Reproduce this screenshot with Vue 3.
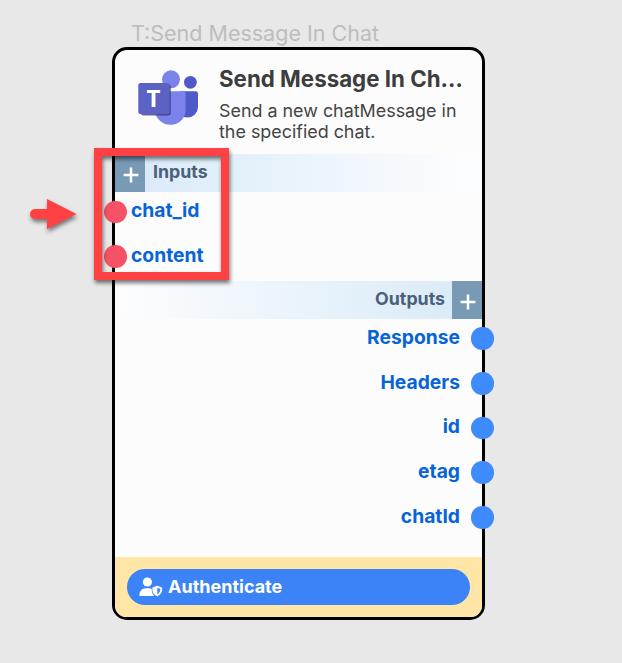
<script setup>
const inputs = ['chat_id', 'content']
const outputs = ['Response', 'Headers', 'id', 'etag', 'chatId']
</script>

<template>
  <main class="canvas">
    <div class="caption">T:Send Message In Chat</div>
    <section class="node">
      <header class="head">
        <svg class="logo" width="62" height="58" viewBox="0 0 62 58">
          <defs>
            <filter id="soft" x="-20%" y="-20%" width="140%" height="140%"><feGaussianBlur stdDeviation="0.7" /></filter>
          </defs>
          <circle cx="52.4" cy="13.3" r="6.4" fill="#5059c9" />
          <path d="M42 22.3H57.6a2.4 2.4 0 0 1 2.4 2.4V38a10.5 10.5 0 0 1-21 0z" fill="#5059c9" />
          <circle cx="33" cy="10.3" r="9" fill="#7b83eb" />
          <path d="M20 22.3H45a2.6 2.6 0 0 1 2.6 2.6V42a15.3 15 0 0 1-30.4 1z" fill="#7b83eb" />
          <rect x="3" y="15.5" width="29.8" height="31" rx="2.5" fill="#30357d" opacity=".75" filter="url(#soft)" />
          <rect x=".3" y="14" width="31.2" height="31" rx="2.6" fill="#5b62c3" />
          <text class="logo-letter" x="15.5" y="37.6" text-anchor="middle">T</text>
        </svg>
        <div class="intro">
          <h1>Send Message In Ch…</h1>
          <p>Send a new chatMessage in the specified chat.</p>
        </div>
      </header>

      <div class="bar bar-in">
        <button class="add"><svg width="16" height="16" viewBox="0 0 16 16"><path d="M8 .6V15.4M.6 8H15.4" /></svg></button>
        <span>Inputs</span>
      </div>
      <ul class="ports ports-in">
        <li v-for="name in inputs" :key="name"><i class="dot"></i><span>{{ name }}</span></li>
      </ul>

      <div class="bar bar-out">
        <span>Outputs</span>
        <button class="add"><svg width="16" height="16" viewBox="0 0 16 16"><path d="M8 .6V15.4M.6 8H15.4" /></svg></button>
      </div>
      <ul class="ports ports-out">
        <li v-for="name in outputs" :key="name"><span>{{ name }}</span><i class="dot"></i></li>
      </ul>

      <footer class="foot">
        <button class="auth">
          <svg width="24" height="20" viewBox="0 0 24 20">
            <circle cx="8.4" cy="5" r="4.6" fill="#fff" />
            <path d="M.4 18.6C.4 14 3 11.3 7 11.3H10c1.2 0 2 .2 3 .7v1.5c0 2.2.8 4 2.2 5.6H1.3C.7 19.1.4 19 .4 18.6z" fill="#fff" />
            <path d="M18.2 8.4 23.3 10.4V12.8C23.3 15.5 21.5 18.1 18.2 19.5 14.9 18.1 13.1 15.5 13.1 12.8V10.4z" fill="#fff" stroke="#3d83f8" stroke-width=".5" />
            <path d="M18.3 10.7V17.2C20.2 16.2 21.2 14.6 21.2 12.7V11.8z" fill="#3d83f8" />
          </svg>
          <span>Authenticate</span>
        </button>
      </footer>
    </section>

    <div class="highlight"></div>
    <svg class="pointer" width="60" height="44" viewBox="0 0 60 44">
      <path d="M11 17H23V7L52.5 22 23 37V27H11a5 5 0 0 1 0-10z" />
    </svg>
  </main>
</template>

<style>
body {
  margin: 0;
  background: #e8e8e8;
}
</style>

<style scoped>
.canvas {
  position: relative;
  box-sizing: border-box;
  width: 622px;
  height: 663px;
  padding: 20px 0 0 112px;
  overflow: hidden;
  background: #e8e8e8;
  font-family: Inter, sans-serif;
}
.caption {
  height: 27px;
  padding-left: 19px;
  font-size: 21.5px;
  line-height: 27px;
  color: #bdbdbd;
  white-space: nowrap;
}
.node {
  display: flex;
  flex-direction: column;
  box-sizing: border-box;
  width: 373px;
  height: 573px;
  border: 3px solid #000;
  border-radius: 15px;
  background: #fcfcfc;
}
.head {
  display: flex;
  box-sizing: border-box;
  height: 104px;
  padding: 19px 0 0 23px;
  gap: 19px;
}
.logo {
  flex: none;
}
.logo-letter {
  font: 700 24px "Open Sans", sans-serif;
  fill: #fff;
}
h1 {
  margin: -4px 0 0;
  font-size: 22.3px;
  font-weight: 700;
  line-height: 27px;
  color: #3d3d3d;
  white-space: nowrap;
}
p {
  width: 245px;
  margin: 8px 0 0;
  font-size: 17.9px;
  line-height: 21px;
  color: #444;
}
.bar {
  display: flex;
  flex: none;
  height: 38px;
  font-size: 17.8px;
  font-weight: 700;
  line-height: 35px;
  color: #4b607a;
}
.bar-in {
  gap: 8px;
  background: linear-gradient(90deg, #d8eaf7, #e2f0fa 32%, #edf5fc 58%, #fcfdfe 95%);
}
.bar-out {
  justify-content: flex-end;
  gap: 7px;
  background: linear-gradient(270deg, #d8eaf7, #e2f0fa 32%, #edf5fc 58%, #fdfdfe 100%);
}
button {
  padding: 0;
  border: 0;
  font: inherit;
}
.add {
  display: flex;
  align-items: center;
  justify-content: center;
  width: 30px;
  height: 38px;
  padding: 3px 0 0 1px;
  background: #789ab5;
}
.add path {
  stroke: #fff;
  stroke-width: 2.5;
}
.ports {
  display: flex;
  flex: none;
  flex-direction: column;
  margin: 0;
  padding: 0;
  list-style: none;
  font-size: 19.3px;
  font-weight: 700;
  color: #0764d8;
}
.ports li {
  display: flex;
  align-items: center;
  height: 44.7px;
}
.ports li span {
  margin-top: -3px;
}
.ports-in {
  box-sizing: border-box;
  height: 89px;
  margin-top: -2.4px;
  margin-bottom: 2.4px;
}
.ports-out {
  flex: 1;
  margin-top: -2.8px;
}
.ports-out li {
  justify-content: flex-end;
}
.dot {
  flex: none;
  width: 22.6px;
  height: 22.6px;
  border-radius: 50%;
}
.ports-in .dot {
  margin: 0 4px 0 -10.6px;
  background: #f65164;
}
.ports-out .dot {
  margin: 0 -12px 0 11.4px;
  background: #3d8bfc;
}
.foot {
  box-sizing: border-box;
  height: 60px;
  padding: 12px;
  border-radius: 0 0 11px 11px;
  background: #ffe6a6;
}
.auth {
  display: flex;
  align-items: center;
  gap: 5px;
  width: 343px;
  height: 36px;
  padding-left: 12px;
  border-radius: 18px;
  background: #3d83f8;
  color: #fff;
  font-size: 18px;
  font-weight: 700;
}
.auth span {
  margin-top: -2px;
}
.highlight {
  position: absolute;
  left: 94px;
  top: 148px;
  box-sizing: border-box;
  width: 135px;
  height: 132px;
  border: 8px solid #ff4144;
  filter: drop-shadow(1px 3px 2px rgba(0, 0, 0, .55));
}
.pointer {
  position: absolute;
  left: 24px;
  top: 192px;
  fill: #ff4144;
  filter: drop-shadow(1px 3px 2px rgba(0, 0, 0, .5));
}
</style>
